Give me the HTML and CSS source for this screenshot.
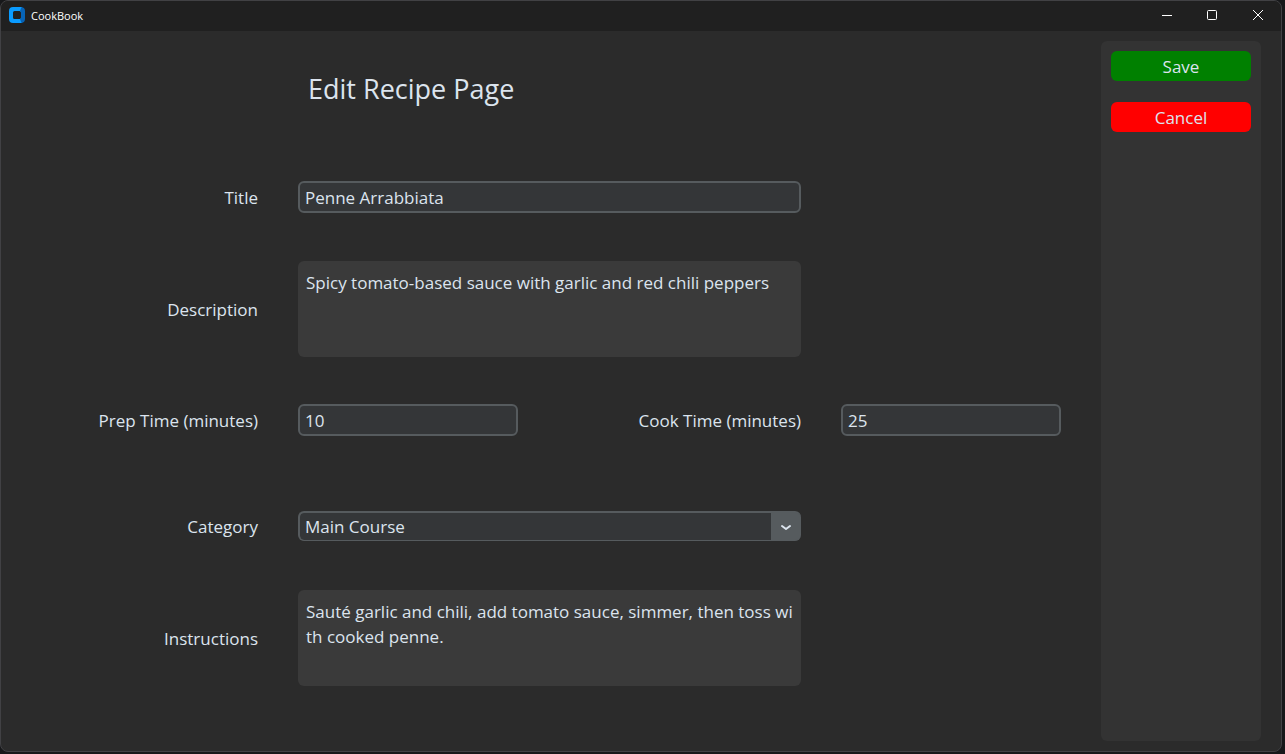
FILE: index.html
```html
<!DOCTYPE html>
<html lang="en">
<head>
<meta charset="utf-8">
<title>CookBook</title>
<link rel="stylesheet" href="styles.css">
</head>
<body>
<div class="window">
  <header class="titlebar">
    <svg class="logo" viewBox="0 0 16 16" aria-hidden="true">
      <path fill="#0a9bff" fill-rule="evenodd" d="M4 0H13V16H4Q0 16 0 12V4Q0 0 4 0ZM5.500 4Q4 4 4 5.500V10.500Q4 12 5.500 12H10.500Q12 12 12 10.500V5.500Q12 4 10.500 4Z"/>
      <path fill="#0763b5" d="M12.500 0Q16 0.500 16 4V12Q16 15.500 12.500 16L11 12Q12 12 12 10.500V5.500Q12 4 11 4Z"/>
    </svg>
    <span class="app-name">CookBook</span>
    <div class="controls">
      <button class="control" type="button" aria-label="Minimize"><svg viewBox="0 0 12 12"><path d="M2 5.500H12"/></svg></button>
      <button class="control" type="button" aria-label="Maximize"><svg viewBox="0 0 12 12"><rect x="1.500" y="0.500" width="9" height="9" rx="1"/></svg></button>
      <button class="control" type="button" aria-label="Close"><svg viewBox="0 0 12 12"><path d="M1 0L11 10M11 0L1 10"/></svg></button>
    </div>
  </header>
  <main class="content">
    <form class="form" id="recipe">
      <h1 class="heading">Edit Recipe Page</h1>
      <label class="label" for="title">Title</label>
      <input class="field wide" id="title" type="text" value="Penne Arrabbiata">
      <label class="label" for="description">Description</label>
      <textarea class="area wide" id="description" rows="3" spellcheck="false">Spicy tomato-based sauce with garlic and red chili peppers</textarea>
      <label class="label" for="prep">Prep Time (minutes)</label>
      <input class="field" id="prep" type="text" value="10">
      <label class="label" for="cook">Cook Time (minutes)</label>
      <input class="field" id="cook" type="text" value="25">
      <label class="label" for="category">Category</label>
      <div class="combo wide">
        <select class="select" id="category"><option>Main Course</option></select>
        <span class="arrow"><svg viewBox="0 0 12 8" aria-hidden="true"><path d="M2 3L6 6L10 3"/></svg></span>
      </div>
      <label class="label" for="instructions">Instructions</label>
      <textarea class="area wide" id="instructions" rows="3" spellcheck="false">Sauté garlic and chili, add tomato sauce, simmer, then toss with cooked penne.</textarea>
    </form>
    <aside class="sidebar">
      <button class="action save" type="submit" form="recipe">Save</button>
      <button class="action cancel" type="button">Cancel</button>
    </aside>
  </main>
</div>
</body>
</html>
```
FILE: styles.css
```css
* {
  box-sizing: border-box;
}

body {
  margin: 0;
  padding: 0 3px 2px 0;
  min-height: 100vh;
  display: flex;
  background: #17181a;
  color: #dce4ee;
  font: 17px/24px "Open Sans", "Noto Sans", sans-serif;
}

.window {
  flex: 1;
  display: flex;
  flex-direction: column;
  border: 1px solid #414144;
  border-radius: 8px;
  background: #2b2b2b;
  overflow: hidden;
}

.titlebar {
  height: 30px;
  display: flex;
  align-items: center;
  gap: 6px;
  padding-left: 8px;
  background: #202020;
  color: #fff;
}

.logo {
  width: 16px;
  height: 16px;
  margin-bottom: 2px;
}

.app-name {
  font-size: 11px;
  line-height: 16px;
}

.controls {
  display: flex;
  margin-left: auto;
}

.control {
  width: 46px;
  height: 30px;
  padding: 0;
  border: 0;
  display: grid;
  place-items: center;
  background: none;
}

.control svg {
  width: 12px;
  height: 12px;
  fill: none;
  stroke: #fff;
}

.content {
  flex: 1;
  display: flex;
  gap: 40px;
  padding: 10px 20px 10px 0;
}

.form {
  flex: 1;
  display: grid;
  grid-template-columns: 257fr 220fr 243fr 220fr;
  grid-template-rows: 102fr 108fr 116fr 106fr 106fr 118fr;
  column-gap: 40px;
  align-items: center;
  padding-bottom: 44px;
}

.heading {
  grid-column: 2 / 4;
  margin: 0;
  padding: 0 10px 6px;
  font-size: 27px;
  line-height: 36px;
  font-weight: 400;
}

.label {
  padding-top: 2px;
  text-align: right;
}

.label:not([for="cook"]) {
  grid-column: 1;
}

.wide {
  grid-column: 2 / 4;
}

.field,
.area,
.select {
  width: 100%;
  min-width: 0;
  margin: 0;
  color: inherit;
  font: inherit;
}

.field {
  height: 32px;
  padding: 0 5px;
  border: 2px solid #565b5e;
  border-radius: 6px;
  background: #343638;
}

.area {
  display: block;
  height: 96px;
  padding: 9px 3px 9px 8px;
  border: 0;
  border-radius: 6px;
  background: #3a3a3a;
  line-height: 25px;
  word-break: break-all;
  overflow: hidden;
  resize: none;
}

.combo {
  display: flex;
  height: 30px;
  border: 2px solid #565b5e;
  border-width: 2px 0 1px 2px;
  border-radius: 6px;
  background: #565b5e;
  overflow: hidden;
}

.select {
  flex: 1;
  padding: 0 5px;
  border: 0;
  border-radius: 4px 0 0 4px;
  appearance: none;
  background: #343638;
}

.arrow {
  width: 30px;
  display: grid;
  place-items: center;
  pointer-events: none;
}

.arrow svg {
  width: 12px;
  height: 8px;
  fill: none;
  stroke: #dce4ee;
  stroke-width: 2;
  stroke-linecap: round;
  stroke-linejoin: round;
}

.sidebar {
  width: 160px;
  display: flex;
  flex-direction: column;
  gap: 21px;
  padding: 10px;
  border-radius: 6px;
  background: #333;
}

.action {
  height: 30px;
  padding: 2px 0 0;
  border: 0;
  border-radius: 6px;
  color: inherit;
  font: inherit;
}

.save {
  background: #008000;
}

.cancel {
  background: #f00;
}
```
